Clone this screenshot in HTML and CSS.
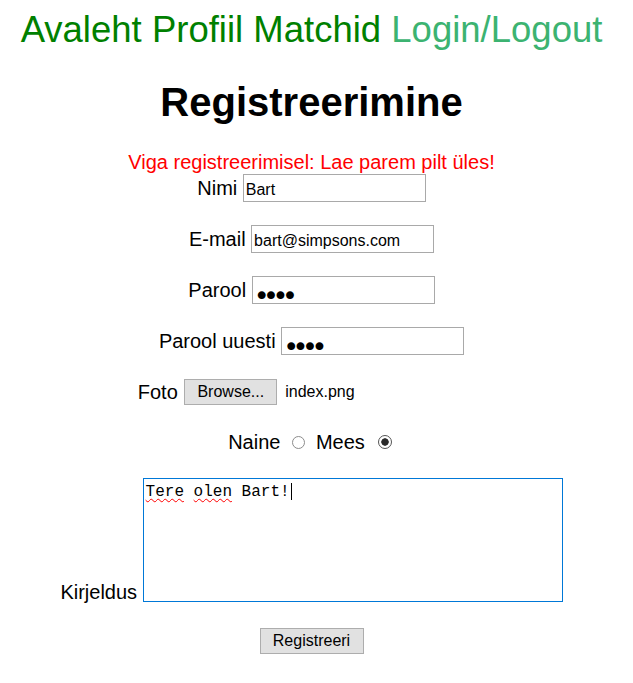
FILE: index.html
```html
<!DOCTYPE html>
<html lang="et">
<head>
<meta charset="utf-8">
<title>Registreerimine</title>
<link rel="stylesheet" href="styles.css">
</head>
<body>
<nav class="nav">
  <a class="nav-link" href="#">Avaleht</a>
  <a class="nav-link" href="#">Profiil</a>
  <a class="nav-link" href="#">Matchid</a>
  <a class="nav-link nav-link-login" href="#">Login/Logout</a>
</nav>
<h1 class="title">Registreerimine</h1>
<p class="error">Viga registreerimisel: Lae parem pilt üles!</p>
<form class="form">
  <div class="row">
    <label class="label" for="nimi">Nimi</label>
    <input class="field" id="nimi" type="text" value="Bart">
  </div>
  <div class="row">
    <label class="label" for="email">E-mail</label>
    <input class="field" id="email" type="text" value="bart@simpsons.com">
  </div>
  <div class="row">
    <label class="label" for="parool">Parool</label>
    <input class="field field-pw" id="parool" type="password" value="bart">
  </div>
  <div class="row">
    <label class="label" for="parool2">Parool uuesti</label>
    <input class="field field-pw" id="parool2" type="password" value="bart">
  </div>
  <div class="row">
    <span class="label">Foto</span>
    <div class="file">
      <button class="btn btn-browse" type="button">Browse...</button>
      <span class="file-name">index.png</span>
    </div>
  </div>
  <div class="row row-gender">
    <span class="label">Naine</span>
    <input class="radio radio-first" type="radio" name="sugu" value="naine">
    <span class="label label-mees">Mees</span>
    <input class="radio radio-second" type="radio" name="sugu" value="mees" checked>
  </div>
  <div class="row row-text">
    <span class="label label-kirjeldus">Kirjeldus</span>
    <div class="textarea"><span class="typo">Tere</span> <span class="typo">olen</span> Bart!<span class="caret"></span></div>
  </div>
  <div class="row row-submit">
    <button class="btn btn-submit" type="button">Registreeri</button>
  </div>
</form>
</body>
</html>
```

FILE: styles.css
```css
html, body {
  background: #ffffff;
}

body {
  margin: 8px 18px 8px 8px;
  font-family: "Liberation Sans", Arial, sans-serif;
  font-size: 20px;
  color: #000000;
}

.nav {
  margin: 1px 0 0;
  text-align: center;
  font-size: 36.5px;
  line-height: 42px;
  white-space: nowrap;
}

.nav-link {
  color: #008000;
  text-decoration: none;
}

.nav-link-login {
  color: #3cb371;
}

.title {
  margin: 28px 0 26px;
  text-align: center;
  font-size: 40px;
  line-height: 46px;
  font-weight: bold;
}

.error {
  margin: 0;
  text-align: center;
  color: #ff0000;
  font-size: 20px;
  line-height: 23px;
}

.form {
  display: flex;
  flex-direction: column;
  gap: 23px;
}

.row {
  display: flex;
  justify-content: center;
  align-items: center;
  gap: 5.5px;
  height: 28px;
}

.label {
  line-height: 23px;
  white-space: nowrap;
  padding-top: 1px;
}

.field {
  box-sizing: border-box;
  width: 183px;
  height: 28px;
  margin: 0;
  padding: 5px 2px 1px;
  border: 1px solid #a9a9a9;
  border-radius: 0;
  font-family: "Liberation Sans", Arial, sans-serif;
  font-size: 16px;
  color: #000000;
  background: #ffffff;
  outline: none;
}

.field-pw {
  font-family: "DejaVu Sans", sans-serif;
  font-size: 27px;
  line-height: 16px;
  letter-spacing: -6.5px;
  padding: 10px 2px 0 1px;
}

.file {
  width: 302px;
  display: flex;
  align-items: center;
}

.btn {
  box-sizing: border-box;
  margin: 0;
  padding: 0;
  height: 26px;
  border: 1px solid #adadad;
  border-radius: 0;
  background: #e1e1e1;
  font-family: "Liberation Sans", Arial, sans-serif;
  font-size: 16px;
  color: #000000;
}

.btn-browse {
  width: 93px;
  margin-left: 1px;
}

.file-name {
  margin-left: 8px;
  font-size: 16px;
}

.row-gender {
  height: 26px;
  gap: 0;
}

.radio {
  appearance: none;
  -webkit-appearance: none;
  box-sizing: border-box;
  width: 13px;
  height: 13px;
  margin: 0;
  border: 1px solid #8c8c8c;
  border-radius: 50%;
  background: #ffffff;
}

.radio:checked {
  width: 14px;
  height: 14px;
  border: 1.5px solid #555555;
  background: radial-gradient(circle, #2b2b2b 0 3.4px, #ffffff 4px);
}

.radio-first {
  margin-left: 11.5px;
}

.label-mees {
  margin-left: 11px;
}

.radio-second {
  margin-left: 13px;
  margin-right: 3px;
}

.row-text {
  height: 124px;
  align-items: flex-end;
}

.label-kirjeldus {
  margin-bottom: -2px;
}

.textarea {
  box-sizing: border-box;
  width: 420px;
  height: 124px;
  padding: 4px 2px;
  border: 1px solid #0078d7;
  font-family: "Liberation Mono", "Courier New", monospace;
  font-size: 16px;
  line-height: 18px;
  white-space: pre;
}

.typo {
  text-decoration: underline wavy #ff0000;
  text-decoration-thickness: 1px;
  text-decoration-skip-ink: none;
  text-underline-offset: 2px;
}

.caret {
  display: inline-block;
  width: 1px;
  height: 17px;
  margin-left: 1px;
  background: #000000;
  vertical-align: -4px;
}

.row-submit {
  height: 26px;
  margin-top: 3px;
}

.btn-submit {
  width: 104px;
}
```
